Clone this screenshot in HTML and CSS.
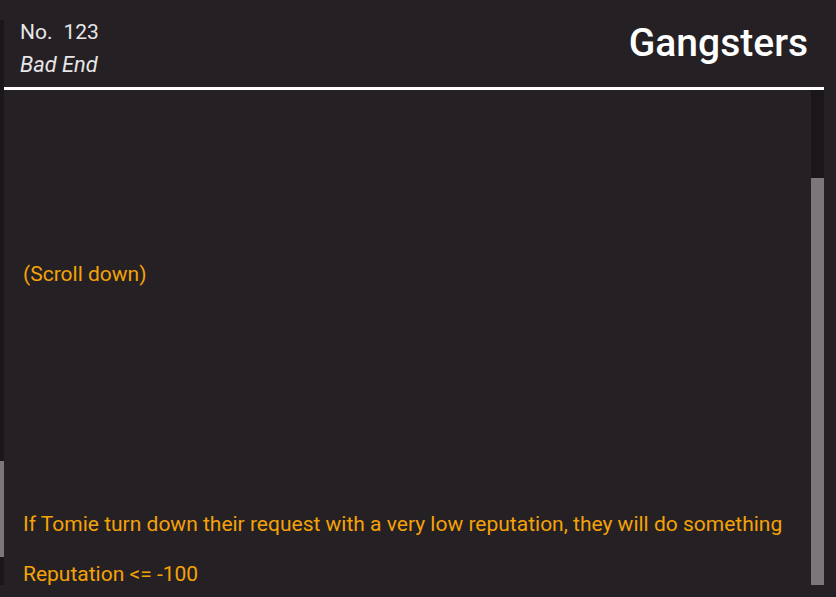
FILE: index.html
```html
<!DOCTYPE html>
<html>
<head>
<meta charset="utf-8">
<link rel="stylesheet" href="styles.css">
</head>
<body>
<div class="frame">
  <div class="side-scroll"><div class="side-thumb"></div></div>
  <div class="panel">
    <header class="head">
      <div class="meta">
        <div class="num"><span>No.</span><span>123</span></div>
        <div class="kind">Bad End</div>
      </div>
      <h1 class="title">Gangsters</h1>
    </header>
    <div class="body-area">
      <div class="content">
        <p class="hint">(Scroll down)</p>
        <p class="desc">If Tomie turn down their request with a very low reputation, they will do something</p>
        <p class="cond">Reputation &lt;= -100</p>
      </div>
      <div class="scroll"><div class="scroll-thumb"></div></div>
    </div>
  </div>
</div>
</body>
</html>
```

FILE: styles.css
```css
html, body {
  margin: 0;
  padding: 0;
  background: #242024;
  height: 597px;
  overflow: hidden;
  font-family: Roboto, "Noto Sans", sans-serif;
}
.frame {
  display: flex;
  padding-top: 20px;
  height: 577px;
}
.side-scroll {
  width: 4px;
  height: 565px;
  background: #1a1619;
  display: flex;
  flex-direction: column;
  padding-top: 441px;
  box-sizing: border-box;
}
.side-thumb {
  height: 96px;
  background: #7a7679;
}
.panel {
  flex: 1;
  margin-right: 12px;
  display: flex;
  flex-direction: column;
}
.head {
  display: flex;
  justify-content: space-between;
  align-items: flex-start;
  padding: 0 16px 0 16px;
  height: 67px;
  border-bottom: 3px solid #ffffff;
}
.meta {
  color: #e8e6e8;
  font-size: 21px;
}
.num {
  display: flex;
  gap: 11px;
  line-height: 24px;
}
.kind {
  font-style: italic;
  font-size: 21.8px;
  margin-top: 9px;
  line-height: 24px;
}
.title {
  margin: 0;
  font-size: 39px;
  font-weight: 500;
  color: #ffffff;
  line-height: 46px;
}
.body-area {
  display: flex;
  height: 495px;
}
.content {
  flex: 1;
  padding-left: 19px;
  color: #f4a206;
  font-size: 21px;
  line-height: 24px;
}
.content p {
  margin: 0;
}
.hint {
  padding-top: 172px;
}
.desc {
  margin-top: 226px !important;
}
.cond {
  margin-top: 26px !important;
}
.scroll {
  width: 13px;
  background: #1a1619;
  display: flex;
  flex-direction: column;
  padding-top: 88px;
  box-sizing: border-box;
}
.scroll-thumb {
  flex: 1;
  background: #7a7679;
}
```
